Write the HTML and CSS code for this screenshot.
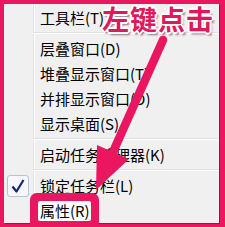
FILE: index.html
```html
<!DOCTYPE html>
<html>
<head>
<meta charset="utf-8">
<link rel="stylesheet" href="styles.css">
</head>
<body>
<div class="frame">
  <div class="menu">
    <div class="item">工具栏(T)</div>
    <div class="sep"></div>
    <div class="item">层叠窗口(D)</div>
    <div class="item">堆叠显示窗口(T)</div>
    <div class="item">并排显示窗口(D)</div>
    <div class="item">显示桌面(S)</div>
    <div class="sep"></div>
    <div class="item">启动任务管理器(K)</div>
    <div class="sep"></div>
    <div class="item checked"><span class="check"><svg width="20" height="20" viewBox="0 0 20 20"><path d="M4.5 10.5 L8.5 15.5 L15.5 4" fill="none" stroke="#14257a" stroke-width="2.2" stroke-linejoin="round"/></svg></span>锁定任务栏(L)</div>
    <div class="item"><span class="marked">属性(R)</span></div>
  </div>
  <div class="title">左键点击</div>
  <svg class="arrow" width="225" height="227" viewBox="0 0 225 227">
    <line x1="163" y1="40" x2="113" y2="152" stroke="#ea1660" stroke-width="8.5" stroke-linecap="round"/>
    <polygon points="96,190 97,145 129,159" fill="#ea1660"/>
  </svg>
</div>
</body>
</html>
```
FILE: styles.css
```css
html, body {
  margin: 0;
  padding: 0;
}
.frame {
  position: relative;
  width: 225px;
  height: 227px;
  box-sizing: border-box;
  padding: 4px 6px 4px 4px;
  background: #ea1660;
  overflow: hidden;
  font-family: "Noto Sans CJK SC", "Noto Sans", sans-serif;
}
.menu {
  height: 219px;
  box-sizing: border-box;
  padding-top: 1px;
  display: flex;
  flex-direction: column;
  background: linear-gradient(to right, transparent 29px, #e2e3e3 29px, #e2e3e3 30px, #ffffff 30px, #ffffff 31px, transparent 31px), #f0f0f0;
  box-shadow: 1px 1px 0 #8c1c42;
}
.item {
  height: 25px;
  flex: none;
  display: flex;
  align-items: center;
  padding-left: 36px;
  font-size: 15px;
  color: #000;
  white-space: nowrap;
}
.item.checked {
  padding-left: 3px;
}
.check {
  width: 20px;
  height: 20px;
  margin-right: 11px;
  border: 1px solid #b3c3da;
  border-radius: 3px;
  background: #f6f8fb;
  display: flex;
  align-items: center;
  justify-content: center;
}
.sep {
  height: 6px;
  flex: none;
  margin-left: 29px;
  background: linear-gradient(to bottom, transparent 2px, #e0e0e0 2px, #e0e0e0 3px, #ffffff 3px, #ffffff 4px, transparent 4px);
}
.marked {
  background: #ffffff;
  line-height: 20px;
  padding: 0 1px 0 2px;
  margin-left: -2px;
  border-radius: 2px;
  box-shadow: 0 0 0 8px #ea1660;
}
.title {
  position: absolute;
  left: 102px;
  top: 1px;
  font-size: 27px;
  line-height: 36px;
  font-weight: 700;
  letter-spacing: 1px;
  color: #e0185c;
  text-shadow: 1px 0 0 #fff, -1px 0 0 #fff, 0 1px 0 #fff, 0 -1px 0 #fff, 2px 0 0 #fff, -2px 0 0 #fff, 0 2px 0 #fff, 0 -2px 0 #fff, 1px 1px 0 #fff, -1px -1px 0 #fff, 1px -1px 0 #fff, -1px 1px 0 #fff, 2px 3px 2px rgba(90, 20, 50, 0.6);
}
.arrow {
  position: absolute;
  left: 0;
  top: 0;
  pointer-events: none;
}
```
